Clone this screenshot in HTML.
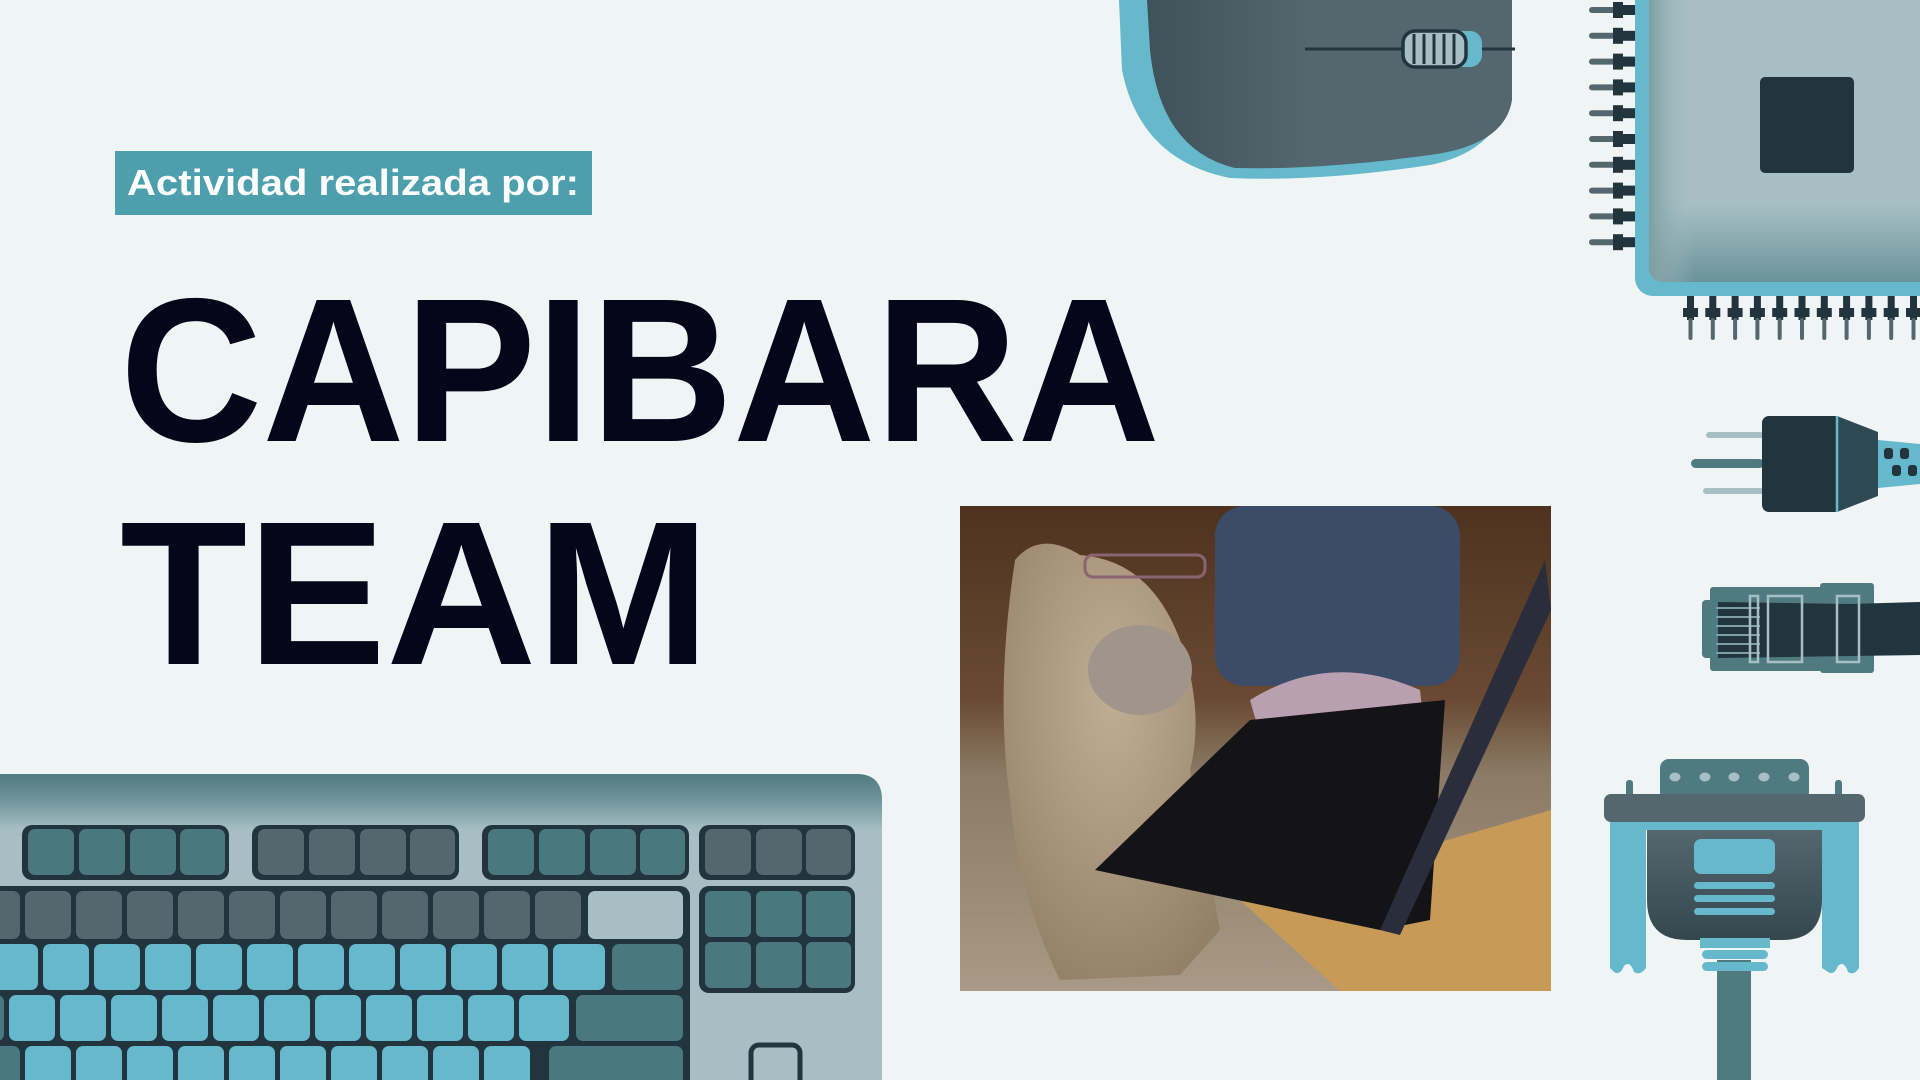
<!DOCTYPE html>
<html><head><meta charset="utf-8"><style>
html,body{margin:0;padding:0;background:#eff5f5;}
svg{display:block}
</style></head><body>
<svg width="1920" height="1080" viewBox="0 0 1920 1080" xmlns="http://www.w3.org/2000/svg">
<defs>
<linearGradient id="kbtop" x1="0" y1="0" x2="0" y2="1"><stop offset="0" stop-color="#4f7a80"/><stop offset="0.45" stop-color="#6f949a"/><stop offset="1" stop-color="#a7bfc4"/></linearGradient>
<linearGradient id="mshade" x1="0" y1="0" x2="1" y2="0"><stop offset="0" stop-color="#3f5159"/><stop offset="0.45" stop-color="#54666e"/><stop offset="1" stop-color="#54666e"/></linearGradient>
<linearGradient id="cpush" x1="0" y1="0" x2="0" y2="1"><stop offset="0.75" stop-color="#a7bfc4"/><stop offset="1" stop-color="#6a939a"/></linearGradient>
<linearGradient id="cpul" x1="0" y1="0" x2="1" y2="0"><stop offset="0" stop-color="#7e9ea4"/><stop offset="0.15" stop-color="#a7bfc4" stop-opacity="0"/></linearGradient>
<linearGradient id="wall" x1="0" y1="0" x2="0" y2="1"><stop offset="0" stop-color="#4e3220"/><stop offset="0.4" stop-color="#6a4a32"/><stop offset="0.55" stop-color="#8a7a66"/><stop offset="1" stop-color="#a89a86"/></linearGradient>
<radialGradient id="capy" cx="0.5" cy="0.35" r="0.7"><stop offset="0" stop-color="#c0ae94"/><stop offset="1" stop-color="#948066"/></radialGradient>
<linearGradient id="vgad" x1="0" y1="0" x2="0" y2="1"><stop offset="0" stop-color="#54666e"/><stop offset="1" stop-color="#34474f"/></linearGradient>
</defs>
<rect width="1920" height="1080" fill="#eff5f5"/>

<!-- label -->
<rect x="115" y="151" width="477" height="64" fill="#4d9fae"/>
<text x="127" y="195" font-family="Liberation Sans, sans-serif" font-weight="bold" font-size="36" fill="#fff" textLength="452" lengthAdjust="spacingAndGlyphs">Actividad realizada por:</text>

<!-- title -->
<text x="120" y="441" font-family="Liberation Sans, sans-serif" font-weight="bold" font-size="205" fill="#05061a" textLength="1040" lengthAdjust="spacingAndGlyphs">CAPIBARA</text>
<text x="120" y="664" font-family="Liberation Sans, sans-serif" font-weight="bold" font-size="205" fill="#05061a" textLength="590" lengthAdjust="spacingAndGlyphs">TEAM</text>

<!-- photo -->
<g>
<rect x="960" y="506" width="591" height="485" fill="url(#wall)"/>
<rect x="1215" y="506" width="245" height="180" rx="30" fill="#3c4c68"/>
<path d="M1250 700 Q1330 650 1420 690 L1430 780 L1270 770Z" fill="#b9a0b0"/>
<path d="M1240 900 L1551 810 L1551 991 L1340 991Z" fill="#c89a58"/>
<path d="M1015 560 Q1040 530 1080 555 Q1150 560 1180 640 Q1205 710 1190 770 L1220 930 L1180 975 L1060 980 Q1020 900 1010 800 Q995 690 1015 560Z" fill="url(#capy)"/>
<ellipse cx="1140" cy="670" rx="52" ry="45" fill="#a0958a"/>
<path d="M1095 870 L1250 720 L1445 700 L1430 920 L1380 930 Z" fill="#141416"/>
<path d="M1380 930 L1545 560 L1551 610 L1400 935Z" fill="#2a2e3c"/>
<rect x="1085" y="555" width="120" height="22" rx="8" fill="none" stroke="#8a6470" stroke-width="3"/>
</g>

<!-- mouse -->
<path d="M1119 0 L1512 0 L1512 80 Q1505 150 1430 165 Q1320 182 1230 178 Q1140 160 1122 70Z" fill="#66b8cc"/>
<path d="M1147 0 L1512 0 L1512 100 Q1505 145 1430 155 Q1320 170 1235 168 Q1160 150 1150 50Z" fill="url(#mshade)"/>
<line x1="1305" y1="49" x2="1515" y2="49" stroke="#22353e" stroke-width="3"/>
<rect x="1440" y="31" width="42" height="36" rx="12" fill="#66b8cc"/>
<rect x="1403" y="31" width="63" height="36" rx="12" fill="#a7bfc4" stroke="#22353e" stroke-width="3.5"/>
<g stroke="#22353e" stroke-width="3"><line x1="1414" y1="34" x2="1414" y2="64"/><line x1="1424" y1="34" x2="1424" y2="64"/><line x1="1434" y1="34" x2="1434" y2="64"/><line x1="1444" y1="34" x2="1444" y2="64"/><line x1="1454" y1="34" x2="1454" y2="64"/></g>

<!-- cpu -->
<g>
<rect x="1635" y="-30" width="320" height="326" rx="18" fill="#66b8cc"/>
<rect x="1649" y="-30" width="300" height="312" rx="14" fill="url(#cpush)"/>
<rect x="1649" y="-30" width="300" height="312" rx="14" fill="url(#cpul)"/>
<rect x="1760" y="77" width="94" height="96" rx="5" fill="#22353e"/>
<g id="lp"><rect x="1589" y="7" width="30" height="6" rx="3" fill="#54666e"/><rect x="1613" y="2" width="10" height="16" fill="#22353e"/><rect x="1620" y="5" width="15" height="10" fill="#22353e"/></g>
<use href="#lp" y="25.8"/><use href="#lp" y="51.6"/><use href="#lp" y="77.4"/><use href="#lp" y="103.2"/><use href="#lp" y="129"/><use href="#lp" y="154.8"/><use href="#lp" y="180.6"/><use href="#lp" y="206.4"/><use href="#lp" y="232.2"/>
<g id="bp"><rect x="1687" y="296" width="7" height="24" fill="#22353e"/><rect x="1683" y="308" width="15" height="9" fill="#22353e"/><rect x="1688.5" y="318" width="4" height="22" rx="2" fill="#54666e"/></g>
<use href="#bp" x="22.3"/><use href="#bp" x="44.6"/><use href="#bp" x="66.9"/><use href="#bp" x="89.2"/><use href="#bp" x="111.5"/><use href="#bp" x="133.8"/><use href="#bp" x="156.1"/><use href="#bp" x="178.4"/><use href="#bp" x="200.7"/><use href="#bp" x="223"/>
</g>

<!-- plug -->
<rect x="1706" y="432" width="58" height="6" rx="3" fill="#a7bfc4"/>
<rect x="1691" y="459" width="73" height="9" rx="4.5" fill="#4f7a80"/>
<rect x="1703" y="488" width="61" height="6" rx="3" fill="#a7bfc4"/>
<rect x="1762" y="416" width="80" height="96" rx="7" fill="#22353e"/>
<path d="M1837 416 L1878 432 L1878 496 L1837 512Z" fill="#2e4a54"/>
<line x1="1837" y1="416" x2="1837" y2="512" stroke="#66b8cc" stroke-width="2.5"/>
<path d="M1878 440 L1920 444 L1920 484 L1878 488Z" fill="#66b8cc"/>
<rect x="1884" y="448" width="9" height="11" rx="3" fill="#22353e"/><rect x="1900" y="448" width="9" height="11" rx="3" fill="#22353e"/><rect x="1892" y="465" width="9" height="11" rx="3" fill="#22353e"/><rect x="1908" y="465" width="9" height="11" rx="3" fill="#22353e"/>

<!-- ethernet -->
<rect x="1710" y="587" width="112" height="84" rx="3" fill="#4f7a80"/>
<rect x="1820" y="583" width="54" height="90" rx="3" fill="#4f7a80"/>
<path d="M1718 602 L1850 604 L1920 602 L1920 655 L1850 656 L1718 658Z" fill="#22353e"/>
<rect x="1702" y="600" width="12" height="58" rx="4" fill="#4f7a80"/>
<g stroke="#7d9ea4" stroke-width="2"><line x1="1716" y1="608" x2="1760" y2="608"/><line x1="1716" y1="617" x2="1760" y2="617"/><line x1="1716" y1="626" x2="1760" y2="626"/><line x1="1716" y1="635" x2="1760" y2="635"/><line x1="1716" y1="644" x2="1760" y2="644"/><line x1="1716" y1="653" x2="1760" y2="653"/></g>
<g fill="none" stroke="#a7bfc4" stroke-width="2.5"><rect x="1750" y="596" width="8" height="66"/><rect x="1768" y="596" width="34" height="66"/><rect x="1837" y="596" width="22" height="66"/></g>

<!-- vga -->
<rect x="1717" y="960" width="34" height="120" fill="#4f7a80"/>
<rect x="1660" y="759" width="149" height="42" rx="9" fill="#4f7a80"/>
<g fill="#a7bfc4"><ellipse cx="1675" cy="777" rx="5.5" ry="4.5"/><ellipse cx="1705" cy="777" rx="5.5" ry="4.5"/><ellipse cx="1734" cy="777" rx="5.5" ry="4.5"/><ellipse cx="1764" cy="777" rx="5.5" ry="4.5"/><ellipse cx="1794" cy="777" rx="5.5" ry="4.5"/></g>
<rect x="1626" y="780" width="7" height="18" rx="3" fill="#4f7a80"/><rect x="1835" y="780" width="7" height="18" rx="3" fill="#4f7a80"/>
<path d="M1610 820 L1646 820 L1646 968 Q1640 976 1634 972 Q1630 960 1624 966 Q1620 976 1614 972 L1610 968Z" fill="#66b8cc"/>
<path d="M1822 820 L1859 820 L1859 968 Q1854 976 1848 972 Q1844 960 1838 966 Q1834 976 1828 972 L1822 968Z" fill="#66b8cc"/>
<rect x="1610" y="818" width="249" height="12" fill="#66b8cc"/>
<rect x="1604" y="794" width="261" height="28" rx="7" fill="#54666e"/>
<path d="M1647 830 L1822 830 L1822 900 Q1822 940 1782 940 L1687 940 Q1647 940 1647 900Z" fill="url(#vgad)"/>
<rect x="1694" y="839" width="81" height="35" rx="7" fill="#66b8cc"/>
<rect x="1694" y="882" width="81" height="7" rx="3.5" fill="#66b8cc"/><rect x="1694" y="895" width="81" height="7" rx="3.5" fill="#66b8cc"/><rect x="1694" y="908" width="81" height="7" rx="3.5" fill="#66b8cc"/>
<rect x="1700" y="938" width="70" height="10" fill="#66b8cc"/>
<rect x="1702" y="950" width="66" height="9" rx="4.5" fill="#66b8cc"/><rect x="1702" y="962" width="66" height="9" rx="4.5" fill="#66b8cc"/>

<!-- keyboard -->
<path d="M0 774 L856 774 Q882 774 882 800 L882 1080 L0 1080Z" fill="#a7bfc4"/>
<path d="M0 774 L856 774 Q882 774 882 800 L882 830 L0 830Z" fill="url(#kbtop)"/>
<g>
<rect x="22" y="825" width="207" height="55" rx="10" fill="#22353e"/>
<rect x="252" y="825" width="207" height="55" rx="10" fill="#22353e"/>
<rect x="482" y="825" width="207" height="55" rx="10" fill="#22353e"/>
<rect x="699" y="825" width="156" height="55" rx="10" fill="#22353e"/>
<g fill="#4a7880"><rect x="28" y="829" width="46" height="46" rx="7"/><rect x="79" y="829" width="46" height="46" rx="7"/><rect x="130" y="829" width="46" height="46" rx="7"/><rect x="180" y="829" width="45" height="46" rx="7"/></g>
<g fill="#54666e"><rect x="258" y="829" width="46" height="46" rx="7"/><rect x="309" y="829" width="46" height="46" rx="7"/><rect x="360" y="829" width="46" height="46" rx="7"/><rect x="410" y="829" width="45" height="46" rx="7"/></g>
<g fill="#4a7880"><rect x="488" y="829" width="46" height="46" rx="7"/><rect x="539" y="829" width="46" height="46" rx="7"/><rect x="590" y="829" width="46" height="46" rx="7"/><rect x="640" y="829" width="45" height="46" rx="7"/></g>
<g fill="#54666e"><rect x="705" y="829" width="46" height="46" rx="7"/><rect x="756" y="829" width="46" height="46" rx="7"/><rect x="806" y="829" width="45" height="46" rx="7"/></g>

<rect x="-10" y="886" width="700" height="210" rx="10" fill="#22353e"/>
<rect x="699" y="886" width="156" height="107" rx="10" fill="#22353e"/>
<g fill="#4a7880"><rect x="705" y="891" width="46" height="46" rx="6"/><rect x="756" y="891" width="46" height="46" rx="6"/><rect x="806" y="891" width="45" height="46" rx="6"/><rect x="705" y="942" width="46" height="46" rx="6"/><rect x="756" y="942" width="46" height="46" rx="6"/><rect x="806" y="942" width="45" height="46" rx="6"/></g>
<!-- row2 -->
<g fill="#54666e">
<rect x="-26" y="891" width="46" height="48" rx="7"/><rect x="25" y="891" width="46" height="48" rx="7"/><rect x="76" y="891" width="46" height="48" rx="7"/><rect x="127" y="891" width="46" height="48" rx="7"/><rect x="178" y="891" width="46" height="48" rx="7"/><rect x="229" y="891" width="46" height="48" rx="7"/><rect x="280" y="891" width="46" height="48" rx="7"/><rect x="331" y="891" width="46" height="48" rx="7"/><rect x="382" y="891" width="46" height="48" rx="7"/><rect x="433" y="891" width="46" height="48" rx="7"/><rect x="484" y="891" width="46" height="48" rx="7"/><rect x="535" y="891" width="46" height="48" rx="7"/>
</g>
<rect x="588" y="891" width="95" height="48" rx="7" fill="#a7bfc4"/>
<!-- row3 -->
<g fill="#66b8cc">
<rect x="-8" y="944" width="46" height="46" rx="7"/><rect x="43" y="944" width="46" height="46" rx="7"/><rect x="94" y="944" width="46" height="46" rx="7"/><rect x="145" y="944" width="46" height="46" rx="7"/><rect x="196" y="944" width="46" height="46" rx="7"/><rect x="247" y="944" width="46" height="46" rx="7"/><rect x="298" y="944" width="46" height="46" rx="7"/><rect x="349" y="944" width="46" height="46" rx="7"/><rect x="400" y="944" width="46" height="46" rx="7"/><rect x="451" y="944" width="46" height="46" rx="7"/><rect x="502" y="944" width="46" height="46" rx="7"/><rect x="553" y="944" width="52" height="46" rx="7"/>
</g>
<rect x="612" y="944" width="71" height="46" rx="7" fill="#4a7880"/>
<!-- row4 -->
<g fill="#66b8cc">
<rect x="-30" y="995" width="34" height="46" rx="7" fill="#4a7880"/><rect x="9" y="995" width="46" height="46" rx="7"/><rect x="60" y="995" width="46" height="46" rx="7"/><rect x="111" y="995" width="46" height="46" rx="7"/><rect x="162" y="995" width="46" height="46" rx="7"/><rect x="213" y="995" width="46" height="46" rx="7"/><rect x="264" y="995" width="46" height="46" rx="7"/><rect x="315" y="995" width="46" height="46" rx="7"/><rect x="366" y="995" width="46" height="46" rx="7"/><rect x="417" y="995" width="46" height="46" rx="7"/><rect x="468" y="995" width="46" height="46" rx="7"/><rect x="519" y="995" width="50" height="46" rx="7"/>
</g>
<rect x="576" y="995" width="107" height="46" rx="7" fill="#4a7880"/>
<!-- row5 -->
<rect x="-10" y="1046" width="30" height="45" rx="7" fill="#4a7880"/>
<g fill="#66b8cc">
<rect x="25" y="1046" width="46" height="45" rx="7"/><rect x="76" y="1046" width="46" height="45" rx="7"/><rect x="127" y="1046" width="46" height="45" rx="7"/><rect x="178" y="1046" width="46" height="45" rx="7"/><rect x="229" y="1046" width="46" height="45" rx="7"/><rect x="280" y="1046" width="46" height="45" rx="7"/><rect x="331" y="1046" width="46" height="45" rx="7"/><rect x="382" y="1046" width="46" height="45" rx="7"/><rect x="433" y="1046" width="46" height="45" rx="7"/><rect x="484" y="1046" width="46" height="45" rx="7"/>
</g>
<rect x="549" y="1046" width="134" height="45" rx="7" fill="#4a7880"/>
<rect x="751" y="1045" width="49" height="50" rx="8" fill="#a7bfc4" stroke="#22353e" stroke-width="5"/>
</g>
</svg>
</body></html>
